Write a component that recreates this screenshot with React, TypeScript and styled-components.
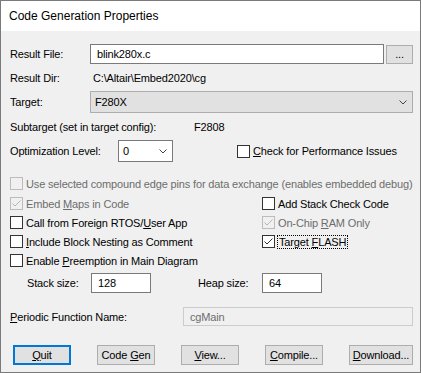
import styled, { createGlobalStyle } from "styled-components";

const GlobalStyle = createGlobalStyle`
  html, body {
    margin: 0;
    padding: 0;
    background: #ffffff;
  }
  body {
    font-family: "Liberation Sans", Arial, sans-serif;
    font-size: 11px;
    letter-spacing: -0.15px;
    color: #000000;
  }
  * {
    box-sizing: border-box;
  }
`;

function Check({ checked, disabled }: { checked?: boolean; disabled?: boolean }) {
    return (
        <Box $disabled={disabled}>
            {checked && (
                <svg width="11" height="11" viewBox="0 0 11 11">
                    <polyline
                        points="1.5,5.5 4,8 9.5,2.5"
                        fill="none"
                        stroke={disabled ? "#b5b5b5" : "#333"}
                        strokeWidth="1"
                    />
                </svg>
            )}
        </Box>
    );
}

function Chevron() {
    return (
        <svg width="8" height="5" viewBox="0 0 8 5">
            <polyline points="0.5,0.5 4,4 7.5,0.5" fill="none" stroke="#444" strokeWidth="1" />
        </svg>
    );
}

export default function App() {
    return (
        <>
            <GlobalStyle />
            <Window>
                <TitleBar>Code Generation Properties</TitleBar>
                <Body>
                    <Row $h={20}>
                        <Label $w={80}>Result File:</Label>
                        <TextBox $grow>blink280x.c</TextBox>
                        <SmallButton>...</SmallButton>
                    </Row>
                    <Row $h={27}>
                        <Label $w={83}>Result Dir:</Label>
                        <span>C:\Altair\Embed2020\cg</span>
                    </Row>
                    <Row $h={22}>
                        <Label $w={80}>Target:</Label>
                        <DropDown $grow $flat>
                            <span>F280X</span>
                            <Chevron />
                        </DropDown>
                    </Row>
                    <Row $h={27}>
                        <Label $w={184}>Subtarget (set in target config):</Label>
                        <span>F2808</span>
                    </Row>
                    <Row $h={22}>
                        <Label $w={108}>Optimization Level:</Label>
                        <DropDown $w={55}>
                            <span>0</span>
                            <Chevron />
                        </DropDown>
                        <CheckItem $ml={64}>
                            <Check />
                            <span><u>C</u>heck for Performance Issues</span>
                        </CheckItem>
                    </Row>

                    <CheckGrid>
                        <CheckItem $span $disabled>
                            <Check disabled />
                            <span>Use selected compound edge pins for data exchange (enables embedded debug)</span>
                        </CheckItem>
                        <CheckItem $disabled>
                            <Check checked disabled />
                            <span>Embed <u>M</u>aps in Code</span>
                        </CheckItem>
                        <CheckItem>
                            <Check />
                            <span>Add Stack Check Code</span>
                        </CheckItem>
                        <CheckItem>
                            <Check />
                            <span>Call from Foreign RTOS/<u>U</u>ser App</span>
                        </CheckItem>
                        <CheckItem $disabled>
                            <Check checked disabled />
                            <span>On-Chip <u>R</u>AM Only</span>
                        </CheckItem>
                        <CheckItem>
                            <Check />
                            <span><u>I</u>nclude Block Nesting as Comment</span>
                        </CheckItem>
                        <CheckItem>
                            <Check checked />
                            <Focused>Target <u>F</u>LASH</Focused>
                        </CheckItem>
                        <CheckItem $span>
                            <Check />
                            <span>Enable <u>P</u>reemption in Main Diagram</span>
                        </CheckItem>
                    </CheckGrid>

                    <Row $h={20} $mt={3}>
                        <Label $w={64} $ml={17}>Stack size:</Label>
                        <TextBox $w={60}>128</TextBox>
                        <Label $w={64} $ml={47}>Heap size:</Label>
                        <TextBox $w={60}>64</TextBox>
                    </Row>
                    <Row $h={19} $mt={14}>
                        <Label $w={173}><u>P</u>eriodic Function Name:</Label>
                        <TextBox $grow $disabled>cgMain</TextBox>
                    </Row>

                    <ButtonBar>
                        <PushButton $default><span><u>Q</u>uit</span></PushButton>
                        <PushButton><span>Code <u>G</u>en</span></PushButton>
                        <PushButton><span><u>V</u>iew...</span></PushButton>
                        <PushButton><span><u>C</u>ompile...</span></PushButton>
                        <PushButton $w={64}><span><u>D</u>ownload...</span></PushButton>
                    </ButtonBar>
                </Body>
            </Window>
        </>
    );
}

const Window = styled.div`
    width: 421px;
    height: 373px;
    border: 1px solid #7a7a7a;
    display: flex;
    flex-direction: column;
    background: #f0f0f0;
`;

const TitleBar = styled.div`
    height: 30px;
    flex: none;
    background: #ffffff;
    display: flex;
    align-items: center;
    padding-left: 8px;
    font-size: 12px;
    letter-spacing: 0;
`;

const Body = styled.div`
    flex: 1;
    padding: 13px 7px 0 9px;
    display: flex;
    flex-direction: column;
`;

const Row = styled.div<{ $h: number; $mt?: number }>`
    display: flex;
    align-items: center;
    height: ${({ $h }) => $h}px;
    margin-top: ${({ $mt }) => $mt ?? 0}px;
    flex: none;
`;

const Label = styled.span<{ $w: number; $ml?: number }>`
    width: ${({ $w }) => $w}px;
    margin-left: ${({ $ml }) => $ml ?? 0}px;
    flex: none;
    white-space: nowrap;
`;

const TextBox = styled.div<{ $w?: number; $grow?: boolean; $disabled?: boolean }>`
    height: 100%;
    ${({ $w }) => ($w ? `width: ${$w}px;` : "")}
    ${({ $grow }) => ($grow ? "flex: 1;" : "flex: none;")}
    border: 1px solid ${({ $disabled }) => ($disabled ? "#cccccc" : "#7a7a7a")};
    background: ${({ $disabled }) => ($disabled ? "#f0f0f0" : "#ffffff")};
    color: ${({ $disabled }) => ($disabled ? "#6d6d6d" : "#000000")};
    display: flex;
    align-items: center;
    padding-left: 6px;
`;

const SmallButton = styled.div`
    width: 27px;
    height: 19px;
    margin-left: 2px;
    align-self: flex-end;
    background: #e1e1e1;
    border: 1px solid #adadad;
    display: flex;
    align-items: center;
    justify-content: center;
    padding-bottom: 2px;
`;

const DropDown = styled.div<{ $w?: number; $grow?: boolean; $flat?: boolean }>`
    height: 100%;
    ${({ $w }) => ($w ? `width: ${$w}px;` : "")}
    ${({ $grow }) => ($grow ? "flex: 1;" : "flex: none;")}
    background: ${({ $flat }) => ($flat ? "#e1e1e1" : "#ffffff")};
    border: 1px solid ${({ $flat }) => ($flat ? "#adadad" : "#7a7a7a")};
    display: flex;
    align-items: center;
    justify-content: space-between;
    padding: 0 5px 0 4px;
`;

const CheckGrid = styled.div`
    margin-top: 11px;
    display: grid;
    grid-template-columns: 252px 1fr;
    grid-template-rows: 21px repeat(4, 19px);
    flex: none;
`;

const CheckItem = styled.div<{ $span?: boolean; $disabled?: boolean; $ml?: number }>`
    display: flex;
    align-items: center;
    gap: 3px;
    white-space: nowrap;
    margin-left: ${({ $ml }) => $ml ?? 0}px;
    ${({ $span }) => ($span ? "grid-column: 1 / span 2;" : "")}
    color: ${({ $disabled }) => ($disabled ? "#6d6d6d" : "#000000")};
`;

const Box = styled.span<{ $disabled?: boolean }>`
    width: 13px;
    height: 13px;
    flex: none;
    border: 1px solid ${({ $disabled }) => ($disabled ? "#bcbcbc" : "#333333")};
    background: ${({ $disabled }) => ($disabled ? "#f0f0f0" : "#ffffff")};
    display: flex;
    align-items: center;
    justify-content: center;
`;

const Focused = styled.span`
    outline: 1px dotted #000000;
    padding: 0 1px;
`;

const ButtonBar = styled.div`
    display: flex;
    gap: 26px;
    margin-top: 19px;
    padding-left: 3px;
`;

const PushButton = styled.div<{ $w?: number; $default?: boolean }>`
    width: ${({ $w }) => $w ?? 58}px;
    height: 20px;
    background: #e1e1e1;
    border: ${({ $default }) => ($default ? "2px solid #0078d7" : "1px solid #adadad")};
    display: flex;
    align-items: center;
    justify-content: center;
    white-space: nowrap;
`;
